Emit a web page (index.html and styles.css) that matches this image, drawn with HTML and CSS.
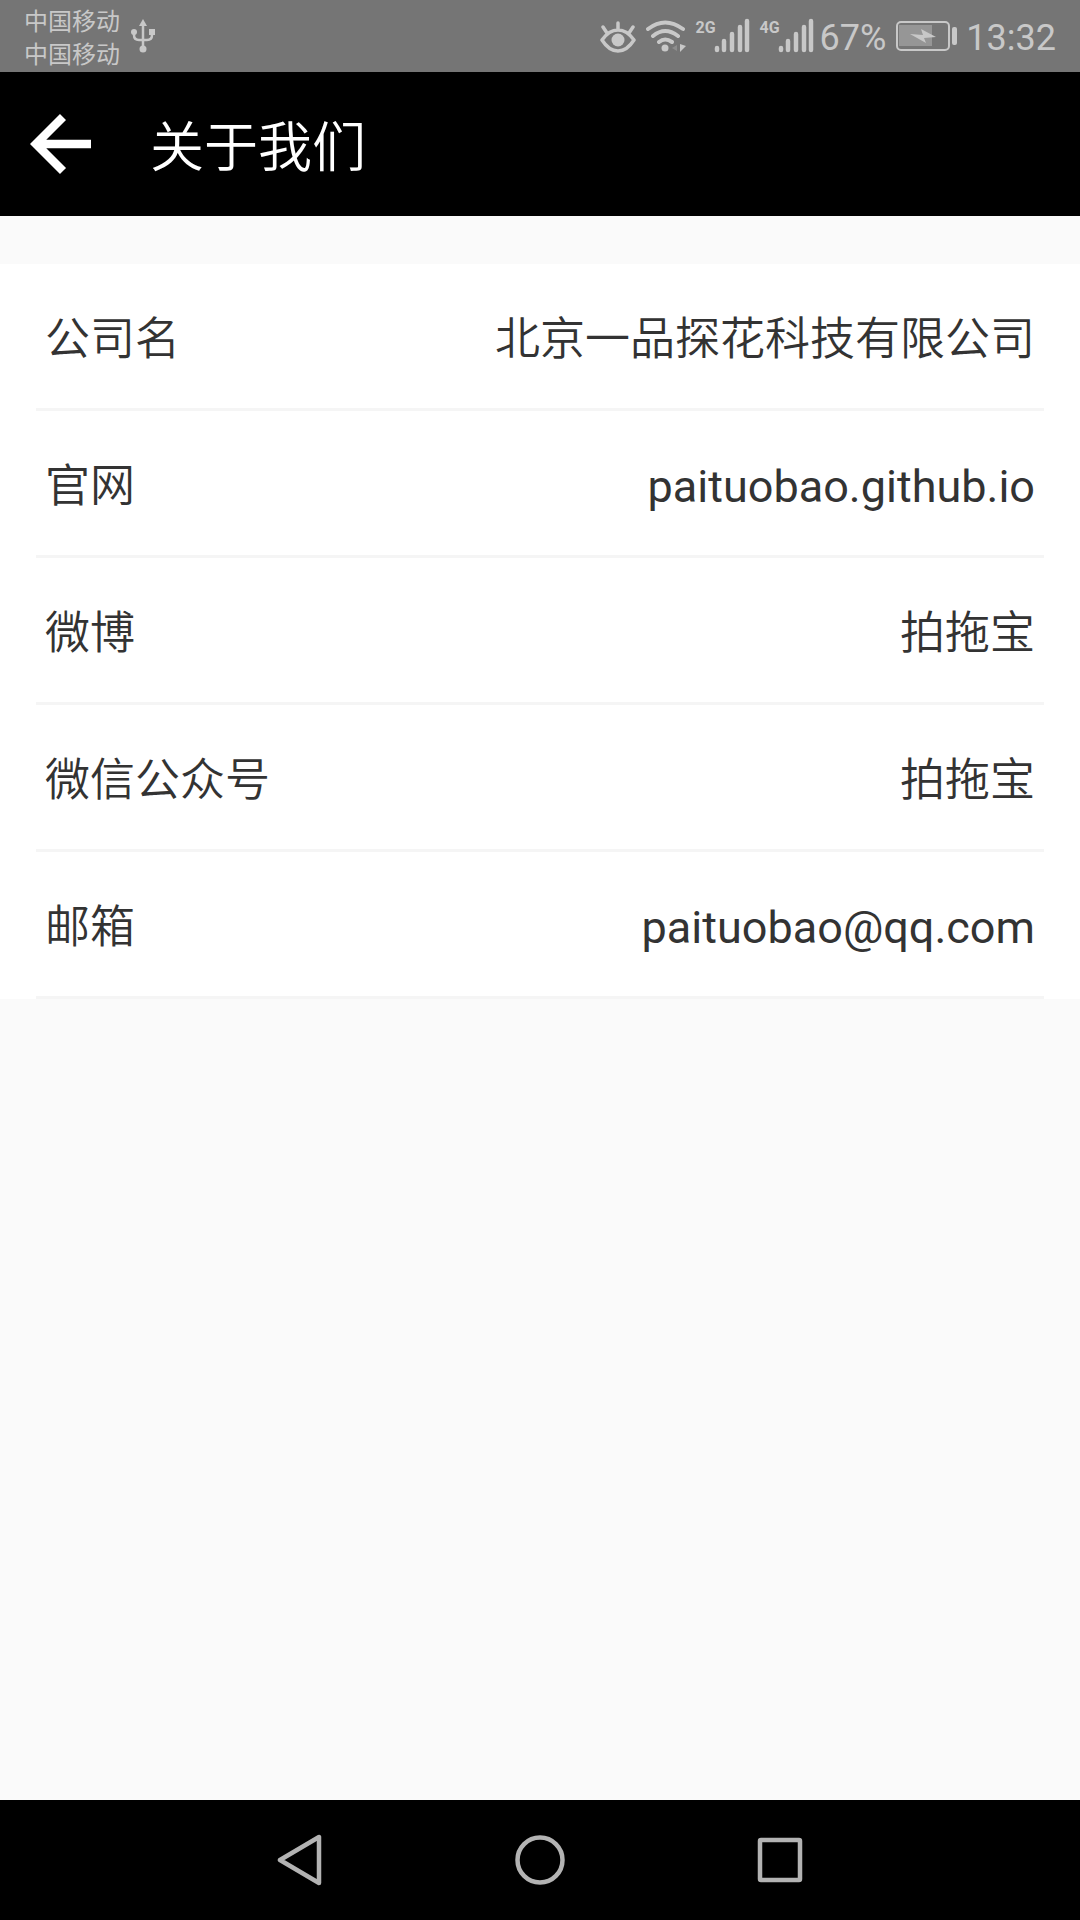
FILE: index.html
```html
<!DOCTYPE html>
<html lang="zh-CN">
<head>
<meta charset="utf-8">
<meta name="viewport" content="width=device-width, initial-scale=1">
<title>关于我们</title>
<link rel="stylesheet" href="styles.css">
</head>
<body>
<div class="status-bar">
  <div class="carriers">
    <span>中国移动</span>
    <span>中国移动</span>
  </div>
  <svg class="usb" width="24" height="36" viewBox="0 0 24 36" aria-hidden="true">
    <path d="M12 6V30M3 14v3q0 5 5 5h8q5 0 5-5v-3" fill="none" stroke="currentColor" stroke-width="2.500"/>
    <path d="M12 1l4 7H8z" fill="currentColor"/>
    <circle cx="3" cy="14" r="3" fill="currentColor"/>
    <path d="M18 11h6v6h-6z" fill="currentColor"/>
    <circle cx="12" cy="31" r="3.500" fill="currentColor"/>
  </svg>
  <div class="indicators">
    <svg width="36" height="36" viewBox="0 0 36 36" aria-hidden="true">
      <path d="M2 22Q9 12 18 12T34 22Q27 33 18 33T2 22zM18 11V5M7 15L3 9M29 15l4-6" fill="none" stroke="currentColor" stroke-width="3.500" stroke-linecap="round" stroke-linejoin="round"/>
      <circle cx="18" cy="22" r="6.500" fill="currentColor"/>
    </svg>
    <svg width="40" height="36" viewBox="0 0 40 36" aria-hidden="true">
      <path d="M2 11Q19-2 37 11M7 18Q19 8 32 18M13 24Q19 19 26 24" fill="none" stroke="currentColor" stroke-width="4" stroke-linecap="round"/>
      <circle cx="19" cy="30" r="3.500" fill="currentColor"/>
      <path d="M31 27v6l-5-3z" fill="currentColor" opacity=".3"/>
      <path d="M34 26l6 2-6 6z" fill="currentColor"/>
    </svg>
    <div class="signal">
      <span>2G</span>
      <svg width="36" height="36" viewBox="0 0 36 36" aria-hidden="true">
        <path d="M3 30v2M10 23v9M18 16v16M26 9v23M33 3v29" fill="none" stroke="currentColor" stroke-width="4.500" stroke-linecap="round"/>
      </svg>
    </div>
    <div class="signal">
      <span>4G</span>
      <svg width="36" height="36" viewBox="0 0 36 36" aria-hidden="true">
        <path d="M3 30v2M10 23v9M18 16v16M26 9v23M33 3v29" fill="none" stroke="currentColor" stroke-width="4.500" stroke-linecap="round"/>
      </svg>
    </div>
  </div>
  <span class="percent">67%</span>
  <svg width="62" height="30" viewBox="0 0 62 30" aria-hidden="true">
    <rect x="1" y="1" width="52" height="28" rx="4" fill="none" stroke="currentColor" stroke-width="2"/>
    <path d="M3 4h33v21H3z" fill="currentColor" opacity=".4"/>
    <path d="M14 13l13 1-2-6 15 8-12 1 2 5z" fill="currentColor"/>
    <rect x="56" y="6" width="5" height="18" rx="2" fill="currentColor"/>
  </svg>
  <time class="clock">13:32</time>
</div>

<header class="app-bar">
  <button class="back" type="button" aria-label="返回">
    <svg width="62" height="62" viewBox="0 0 62 62" aria-hidden="true">
      <path d="M61 31H8M33 4L6 31l27 27" fill="none" stroke="currentColor" stroke-width="8.500"/>
    </svg>
  </button>
  <h1>关于我们</h1>
</header>

<main class="content">
  <dl class="info-list">
    <div class="row"><dt>公司名</dt><dd>北京一品探花科技有限公司</dd></div>
    <div class="row"><dt>官网</dt><dd><a href="https://paituobao.github.io">paituobao.github.io</a></dd></div>
    <div class="row"><dt>微博</dt><dd>拍拖宝</dd></div>
    <div class="row"><dt>微信公众号</dt><dd>拍拖宝</dd></div>
    <div class="row"><dt>邮箱</dt><dd><a href="mailto:paituobao@qq.com">paituobao@qq.com</a></dd></div>
  </dl>
</main>

<nav class="system-nav">
  <button type="button" aria-label="后退">
    <svg width="52" height="52" viewBox="0 0 52 52" aria-hidden="true">
      <path d="M45 3V49L6 26z" fill="none" stroke="currentColor" stroke-width="4.500" stroke-linejoin="round"/>
    </svg>
  </button>
  <button type="button" aria-label="主屏幕">
    <svg width="52" height="52" viewBox="0 0 52 52" aria-hidden="true">
      <circle cx="26" cy="26" r="22.500" fill="none" stroke="currentColor" stroke-width="4.500"/>
    </svg>
  </button>
  <button type="button" aria-label="最近任务">
    <svg width="52" height="52" viewBox="0 0 52 52" aria-hidden="true">
      <rect x="6" y="6" width="40" height="40" rx="1" fill="none" stroke="currentColor" stroke-width="4.500" stroke-linejoin="round"/>
    </svg>
  </button>
</nav>
</body>
</html>
```
FILE: styles.css
```css
* {
  box-sizing: border-box;
}

body {
  margin: 0;
  min-height: 100vh;
  display: flex;
  flex-direction: column;
  background: #fafafa;
  color: #333;
  font-family: Roboto, "Noto Sans CJK SC", sans-serif;
}

svg {
  display: block;
  flex: none;
}

button {
  padding: 0;
  border: 0;
  background: none;
  color: inherit;
}

a {
  color: inherit;
  font-weight: 400;
  text-decoration: none;
}

/* Phone status bar */
.status-bar {
  display: flex;
  align-items: center;
  height: 72px;
  padding: 0 24px;
  background: #757575;
  color: #c8c8c8;
  white-space: nowrap;
}

.carriers {
  display: flex;
  flex-direction: column;
  padding-top: 6px;
  font-size: 24px;
  line-height: 33px;
}

.usb {
  margin-left: 11px;
}

.indicators {
  display: flex;
  gap: 10px;
  margin-left: auto;
}

.signal {
  display: flex;
}

.signal span {
  width: 18px;
  font: bold 16px/20px Roboto, sans-serif;
}

.percent,
.clock {
  padding-top: 4px;
  font-size: 36px;
  line-height: 40px;
}

.percent {
  margin: 0 10px 0 6px;
}

.clock {
  margin-left: 8px;
}

/* Title bar */
.app-bar {
  display: flex;
  align-items: center;
  gap: 58px;
  height: 144px;
  padding: 0 30px;
  background: #000;
  color: #fff;
}

.app-bar h1 {
  margin: 0;
  padding-top: 10px;
  font-size: 54px;
  font-weight: 350;
  line-height: 72px;
}

/* Company details */
.content {
  flex: 1;
  padding-top: 48px;
}

.info-list {
  margin: 0;
  padding: 0 36px;
  background: #fff;
}

.row {
  display: flex;
  align-items: center;
  justify-content: space-between;
  height: 147px;
  padding: 8px 9px 0;
  border-bottom: 3px solid #f5f5f5;
  font-size: 45px;
  font-weight: 350;
  line-height: 60px;
}

.row dd {
  margin: 0;
}

/* Phone navigation keys */
.system-nav {
  display: flex;
  justify-content: center;
  gap: 188px;
  height: 120px;
  background: #000;
  color: #b3b3b3;
}
```
